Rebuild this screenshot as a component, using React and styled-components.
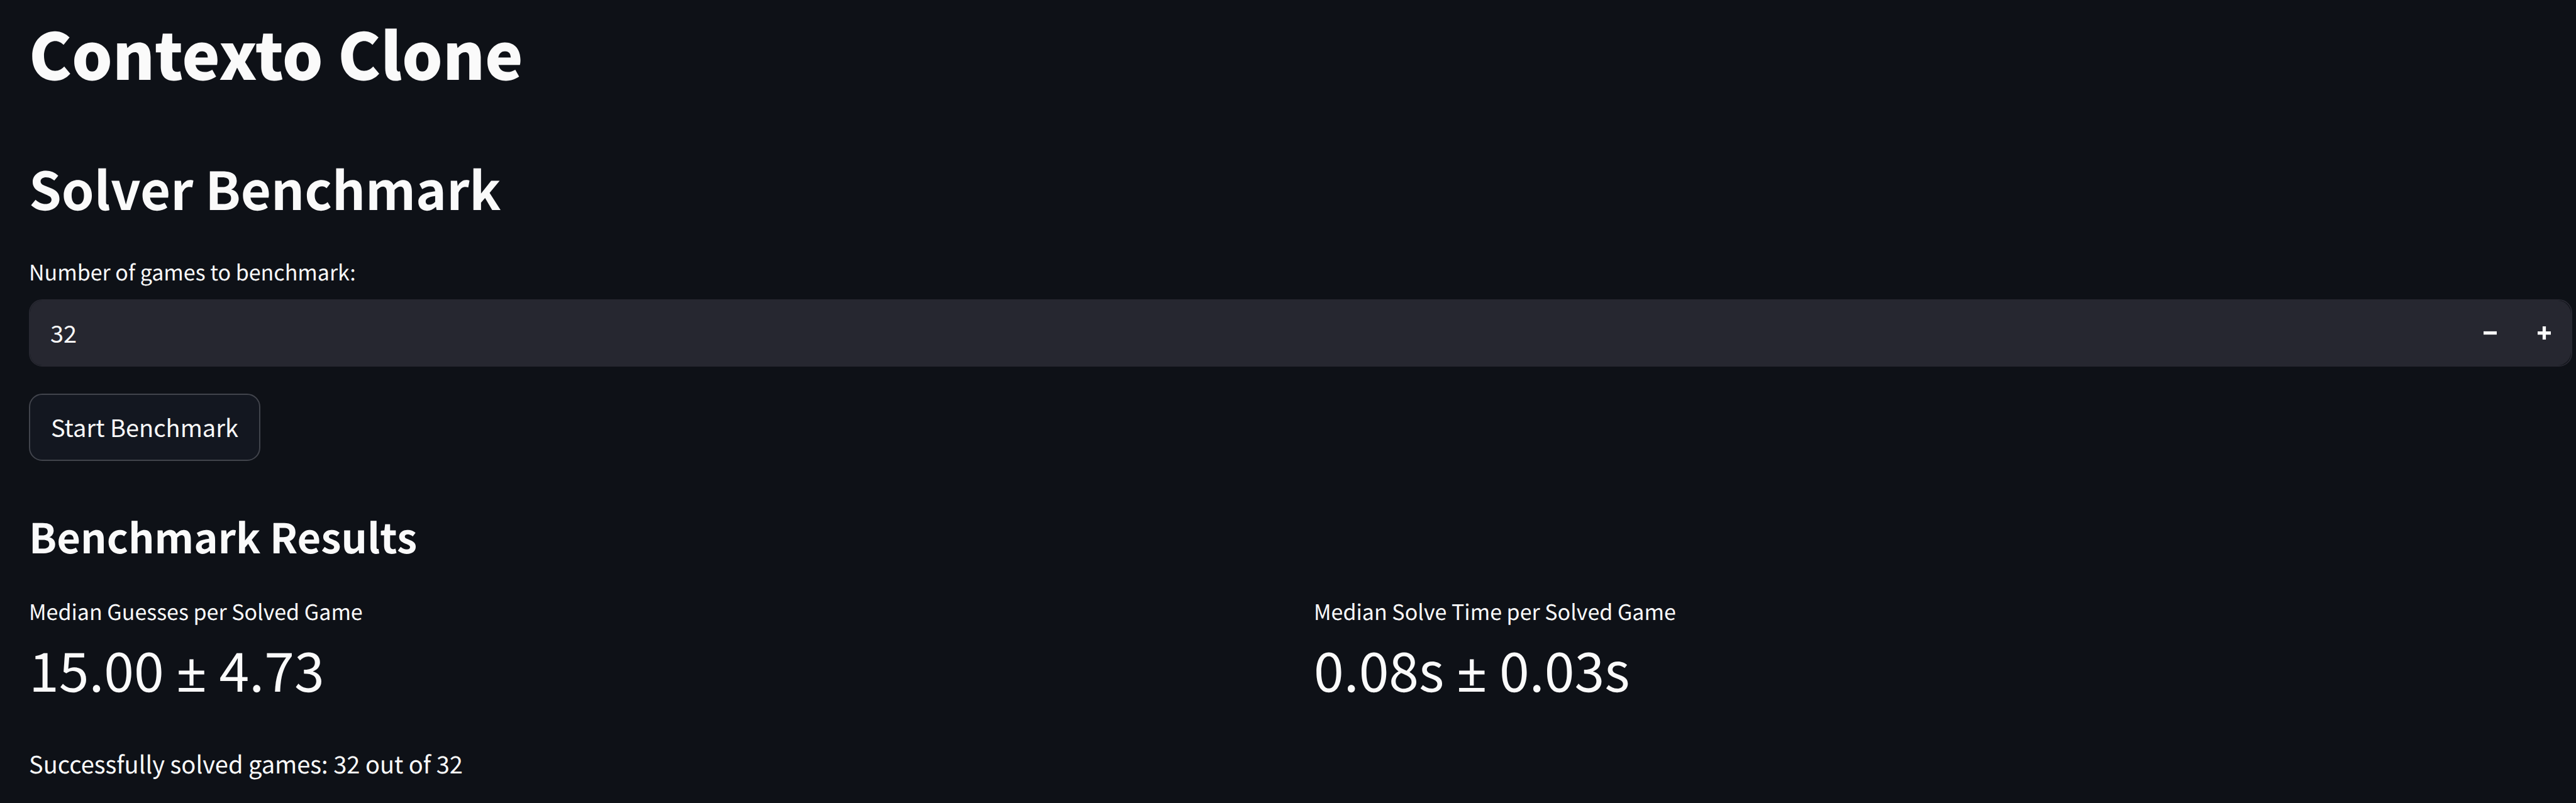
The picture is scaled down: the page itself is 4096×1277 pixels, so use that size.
import React, { useState } from "react";
import styled, { createGlobalStyle } from "styled-components";

const GlobalStyle = createGlobalStyle`
  * { box-sizing: border-box; }
  html { background: #0e1117; }
  body {
    margin: 0;
    color: #fafafa;
    font-family: "Noto Sans CJK SC", "Noto Sans", sans-serif;
    font-weight: 400;
    text-rendering: geometricPrecision;
  }
`;

const Page = styled.main`
  display: flex;
  flex-direction: column;
  padding: 20px 6px 24px 46px;
`;

const Title = styled.h1`
  margin: 0 0 94px;
  font-size: 102px;
  font-weight: 900;
  line-height: 128px;
`;

const Heading = styled.h2`
  margin: 0 0 54px;
  font-size: 83px;
  font-weight: 600;
  line-height: 112px;
`;

const SubHeading = styled.h3`
  margin: 0 0 54px;
  font-size: 65px;
  font-weight: 600;
  line-height: 84px;
`;

const Label = styled.label`
  margin-bottom: 20px;
  font-size: 34px;
  line-height: 48px;
`;

const NumberField = styled.div`
  display: flex;
  height: 107px;
  margin-bottom: 43px;
  border: 2px solid #262730;
  border-radius: 21px;
`;

const NumberInput = styled.input`
  flex: 1;
  min-width: 0;
  padding: 0 32px 2px;
  border: 0;
  border-radius: 19px 0 0 19px;
  outline: 0;
  background: #262730;
  color: inherit;
  font: inherit;
  font-size: 38px;
`;

const StepButton = styled.button`
  display: grid;
  place-items: center;
  width: 86px;
  padding: 0;
  border: 0;
  background: #262730;
  color: inherit;

  &:last-child {
    border-radius: 0 21px 21px 0;
  }
`;

const StartButton = styled.button`
  align-self: flex-start;
  height: 107px;
  margin-bottom: 77px;
  padding: 0 33px 2px;
  border: 2px solid #41444c;
  border-radius: 21px;
  background: #131720;
  color: inherit;
  font: inherit;
  font-size: 38px;
`;

const Metrics = styled.dl`
  display: grid;
  grid-template-columns: 1fr 1fr;
  gap: 42px;
  margin: 0 0 54px;
`;

const MetricName = styled.dt`
  font-size: 34px;
  line-height: 48px;
`;

const MetricValue = styled.dd`
  margin: 0;
  font-size: 86px;
  line-height: 134px;
`;

const PlusMinus = styled.span`
  font-family: "Noto Sans", sans-serif;
  line-height: 1;
`;

const Summary = styled.p`
  margin: 0;
  font-size: 38px;
  line-height: 60px;
`;

const metrics = [
  { name: "Median Guesses per Solved Game", value: "15.00", spread: "4.73" },
  { name: "Median Solve Time per Solved Game", value: "0.08s", spread: "0.03s" },
];

export default function App() {
  const [games, setGames] = useState("32");
  const step = (by) => setGames(String(Math.max(1, Number(games) + by)));
  return (
    <>
      <GlobalStyle />
      <Page>
        <Title>Contexto Clone</Title>
        <Heading>Solver Benchmark</Heading>
        <Label htmlFor="games">Number of games to benchmark:</Label>
        <NumberField>
          <NumberInput id="games" inputMode="numeric" value={games} onChange={(e) => setGames(e.target.value)} />
          <StepButton type="button" aria-label="Decrease" onClick={() => step(-1)}>
            <svg width="21" height="21" viewBox="0 0 8 8" fill="currentColor"><path d="M0 3v2h8V3H0z" /></svg>
          </StepButton>
          <StepButton type="button" aria-label="Increase" onClick={() => step(1)}>
            <svg width="21" height="21" viewBox="0 0 8 8" fill="currentColor"><path d="M3 0v3H0v2h3v3h2V5h3V3H5V0H3z" /></svg>
          </StepButton>
        </NumberField>
        <StartButton type="button">Start Benchmark</StartButton>
        <SubHeading>Benchmark Results</SubHeading>
        <Metrics>
          {metrics.map((m) => (
            <div key={m.name}>
              <MetricName>{m.name}</MetricName>
              <MetricValue>
                {m.value} <PlusMinus>±</PlusMinus> {m.spread}
              </MetricValue>
            </div>
          ))}
        </Metrics>
        <Summary>Successfully solved games: 32 out of 32</Summary>
      </Page>
    </>
  );
}
